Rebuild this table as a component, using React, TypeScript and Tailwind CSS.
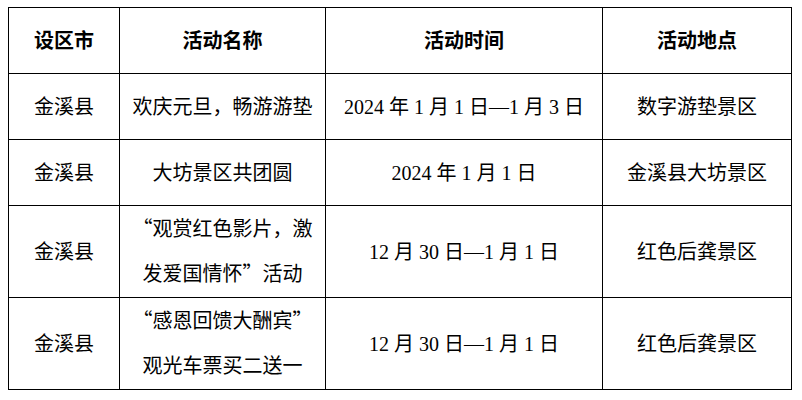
import type { ReactNode } from "react";

// Chinese curly quotes are rendered full-width in the reference
const Q = ({ children }: { children: ReactNode }) => (
  <span className="leading-none" style={{ fontFamily: '"Noto Sans CJK SC", sans-serif' }}>
    {children}
  </span>
);

const rows: { city: string; name: ReactNode[]; time: string; place: string; tall: boolean }[] = [
  { city: "金溪县", name: ["欢庆元旦，畅游游垫"], time: "2024 年 1 月 1 日—1 月 3 日", place: "数字游垫景区", tall: false },
  { city: "金溪县", name: ["大坊景区共团圆"], time: "2024 年 1 月 1 日", place: "金溪县大坊景区", tall: false },
  {
    city: "金溪县",
    name: [
      <><Q>“</Q>观赏红色影片，激</>,
      <>发爱国情怀<Q>”</Q>活动</>,
    ],
    time: "12 月 30 日—1 月 1 日",
    place: "红色后龚景区",
    tall: true,
  },
  {
    city: "金溪县",
    name: [
      <><Q>“</Q>感恩回馈大酬宾<Q>”</Q></>,
      "观光车票买二送一",
    ],
    time: "12 月 30 日—1 月 1 日",
    place: "红色后龚景区",
    tall: true,
  },
];

const cell = "border border-black text-center align-middle p-0";

export default function App() {
  return (
    <div
      className="w-[802px] h-[400px] bg-white pl-[8px] pt-[7px] text-black"
      style={{ fontFamily: '"Liberation Serif", "Noto Sans CJK SC", serif' }}
    >
      <table className="table-fixed border-collapse w-[783px] text-[20px]">
        <colgroup>
          <col className="w-[111px]" />
          <col className="w-[206px]" />
          <col className="w-[277px]" />
          <col className="w-[189px]" />
        </colgroup>
        <thead>
          <tr className="h-[66px] font-bold">
            <th className={cell}>设区市</th>
            <th className={cell}>活动名称</th>
            <th className={cell}>活动时间</th>
            <th className={cell}>活动地点</th>
          </tr>
        </thead>
        <tbody>
          {rows.map((r, i) => (
            <tr key={i} className={r.tall ? "h-[92px]" : "h-[66px]"}>
              <td className={cell}>{r.city}</td>
              <td className={cell}>
                {r.name.map((line, j) => (
                  <div
                    key={j}
                    className={`whitespace-nowrap ${r.tall ? "h-[45px] leading-[45px] overflow-hidden" : ""}`}
                  >
                    {line}
                  </div>
                ))}
              </td>
              <td className={cell}>{r.time}</td>
              <td className={cell}>{r.place}</td>
            </tr>
          ))}
        </tbody>
      </table>
    </div>
  );
}
